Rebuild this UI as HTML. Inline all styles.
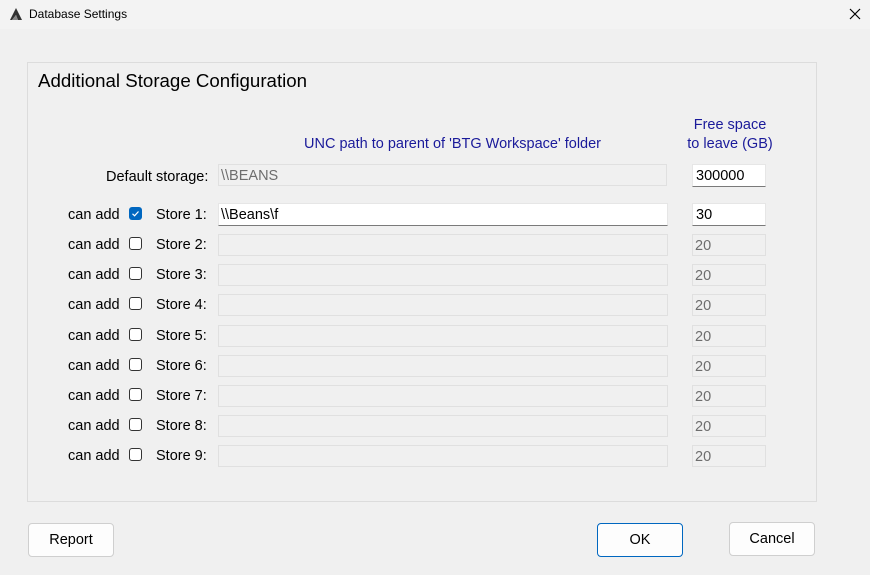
<!DOCTYPE html>
<html><head><meta charset="utf-8"><style>
body{margin:0;width:870px;height:575px;background:#f0f0f0;font-family:"Liberation Sans",sans-serif;position:relative;overflow:hidden}
.a{position:absolute}
.t{font-size:14.5px;color:#000;white-space:nowrap;line-height:18px}
.in{position:absolute;box-sizing:border-box;background:#f0f0f0;border:1px solid #e0e0e0;font-size:14.5px;color:#6d6d6d;padding-left:2px;line-height:22px}
.act{background:#fff;border:1px solid #e6e6e6;border-bottom:1px solid #7a7a7a;color:#000}
.cb{position:absolute;left:129px;width:11px;height:11px;border:1px solid #333;border-radius:3px;background:#fff}
.btn{position:absolute;box-sizing:border-box;height:34px;background:#fdfdfd;border:1px solid #cfcfcf;border-radius:4px;font-size:14.5px;text-align:center;line-height:33px}
</style></head><body>
<div class="a" style="left:0;top:0;width:870px;height:29px;background:#f3f3f3"></div>
<svg class="a" style="left:9px;top:7px" width="14" height="14" viewBox="0 0 14 14"><path d="M7 1 L13 13 L9 13 L7 8 L3 13 L1 13 Z" fill="#333"/><path d="M3 13 L7 8 L9 13Z" fill="#888"/></svg>
<div class="a" style="left:29px;top:7px;font-size:12px;color:#000">Database Settings</div>
<svg class="a" style="left:849px;top:8px" width="12" height="12"><path d="M1 1L11 11M11 1L1 11" stroke="#000" stroke-width="1.2"/></svg>
<div class="a" style="left:27px;top:62px;width:788px;height:438px;border:1px solid #dcdcdc"></div>
<div class="a" style="left:38px;top:70px;font-size:18.7px;color:#000">Additional Storage Configuration</div>
<div class="a t" style="left:304px;top:135px;color:#1a1a9a">UNC path to parent of 'BTG Workspace' folder</div>
<div class="a t" style="left:686px;top:116px;color:#1a1a9a;text-align:center;width:88px;line-height:19px">Free space<br>to leave (GB)</div>
<div class="a t" style="left:106px;top:168px">Default storage:</div>
<div class="in" style="left:218px;top:164px;width:449px;height:22px">\\BEANS</div>
<div class="in act" style="left:692px;top:164px;width:74px;height:23px;padding-left:3px">300000</div>
<div class="a t" style="left:68px;top:206px">can add</div>
<div class="a" style="left:129px;top:207px;width:13px;height:13px;background:#0067c0;border-radius:3px"><svg width="13" height="13"><path d="M3.5 6.8L5.6 8.8L9.5 4.5" stroke="#fff" stroke-width="1.2" fill="none"/></svg></div>
<div class="a t" style="left:156px;top:206px">Store 1:</div>
<div class="in act" style="left:218px;top:203px;width:450px;height:23px">\\Beans\f</div>
<div class="in act" style="left:692px;top:203px;width:74px;height:23px;padding-left:3px">30</div>
<div id="rows"></div>
<script>
var h='';var ys=[244,274,304,335,365,395,425,455];
for(var i=0;i<8;i++){var y=ys[i];
h+='<div class="a t" style="left:68px;top:'+(y-8)+'px">can add</div>';
h+='<div class="cb" style="top:'+(y-7)+'px"></div>';
h+='<div class="a t" style="left:156px;top:'+(y-8)+'px">Store '+(i+2)+':</div>';
h+='<div class="in" style="left:218px;top:'+(y-10)+'px;width:450px;height:22px"></div>';
h+='<div class="in" style="left:692px;top:'+(y-10)+'px;width:74px;height:22px">20</div>';}
document.getElementById('rows').innerHTML=h;
</script>
<div class="btn" style="left:28px;top:523px;width:86px">Report</div>
<div class="btn" style="left:597px;top:523px;width:86px;border:1px solid #0067c0">OK</div>
<div class="btn" style="left:729px;top:522px;width:86px">Cancel</div>
</body></html>
